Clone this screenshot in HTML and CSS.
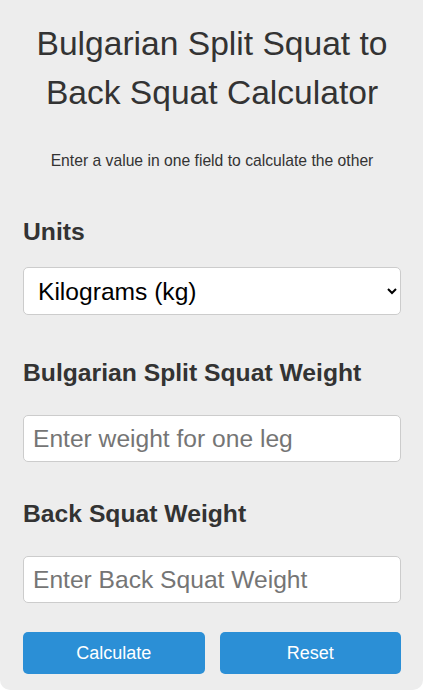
FILE: index.html
```html
<html>
    <head>
        <link rel="stylesheet" href="styles.css">
    </head>
    <body>
        <div class="calculator">
            <h1>Bulgarian Split Squat to Back Squat Calculator</h1>
            <p class="intro">Enter a value in one field to calculate the other</p>

            <label class="field-label units-label" for="units">Units</label>
            <select id="units" class="field">
                <option value="kg">Kilograms (kg)</option>
                <option value="lb">Pounds (lb)</option>
            </select>

            <label class="field-label bss-label" for="bssWeight">Bulgarian Split Squat Weight</label>
            <input id="bssWeight" class="field" type="number" placeholder="Enter weight for one leg"/>

            <label class="field-label back-label" for="backWeight">Back Squat Weight</label>
            <input id="backWeight" class="field" type="number" placeholder="Enter Back Squat Weight"/>

            <div class="buttons">
                <button class="btn">Calculate</button>
                <button class="btn">Reset</button>
            </div>
        </div>
    </body>
</html>
```

FILE: styles.css
```css
body{
    margin: 0;
    background-color: #ffffff;
    font-family: "Liberation Sans", Arial, sans-serif;
}
.calculator{
    width: 423px;
    box-sizing: border-box;
    padding: 19px 22px 16px 23px;
    background-color: #ededed;
    border-radius: 0 0 10px 10px;
}
h1{
    margin: 0;
    font-size: 33.6px;
    line-height: 49px;
    font-weight: normal;
    color: #333333;
    text-align: center;
}
.intro{
    margin: 35px 0 0 0;
    font-size: 15.7px;
    line-height: 18px;
    color: #333333;
    text-align: center;
}
.field-label{
    display: block;
    font-size: 24.7px;
    line-height: 28px;
    font-weight: bold;
    color: #333333;
}
.units-label{
    margin-top: 48px;
    margin-bottom: 21px;
}
.bss-label{
    margin-top: 44px;
    margin-bottom: 28px;
}
.back-label{
    margin-top: 38px;
    margin-bottom: 28px;
}
.field{
    display: block;
    width: 100%;
    box-sizing: border-box;
    background-color: #ffffff;
    border: 1px solid #cccccc;
    border-radius: 5px;
    font-family: "Liberation Sans", Arial, sans-serif;
    font-size: 24.6px;
    color: #000000;
    margin: 0;
}
select.field{
    height: 48px;
    padding: 0 10px;
}
input.field{
    height: 47px;
    padding: 0 9px;
}
input.field::placeholder{
    color: #757575;
}
.buttons{
    display: flex;
    gap: 15px;
    margin-top: 29px;
}
.btn{
    flex: 1;
    height: 42px;
    border: none;
    border-radius: 5px;
    background-color: #2b8fd6;
    color: #ffffff;
    font-family: "Liberation Sans", Arial, sans-serif;
    font-size: 18px;
}
```
